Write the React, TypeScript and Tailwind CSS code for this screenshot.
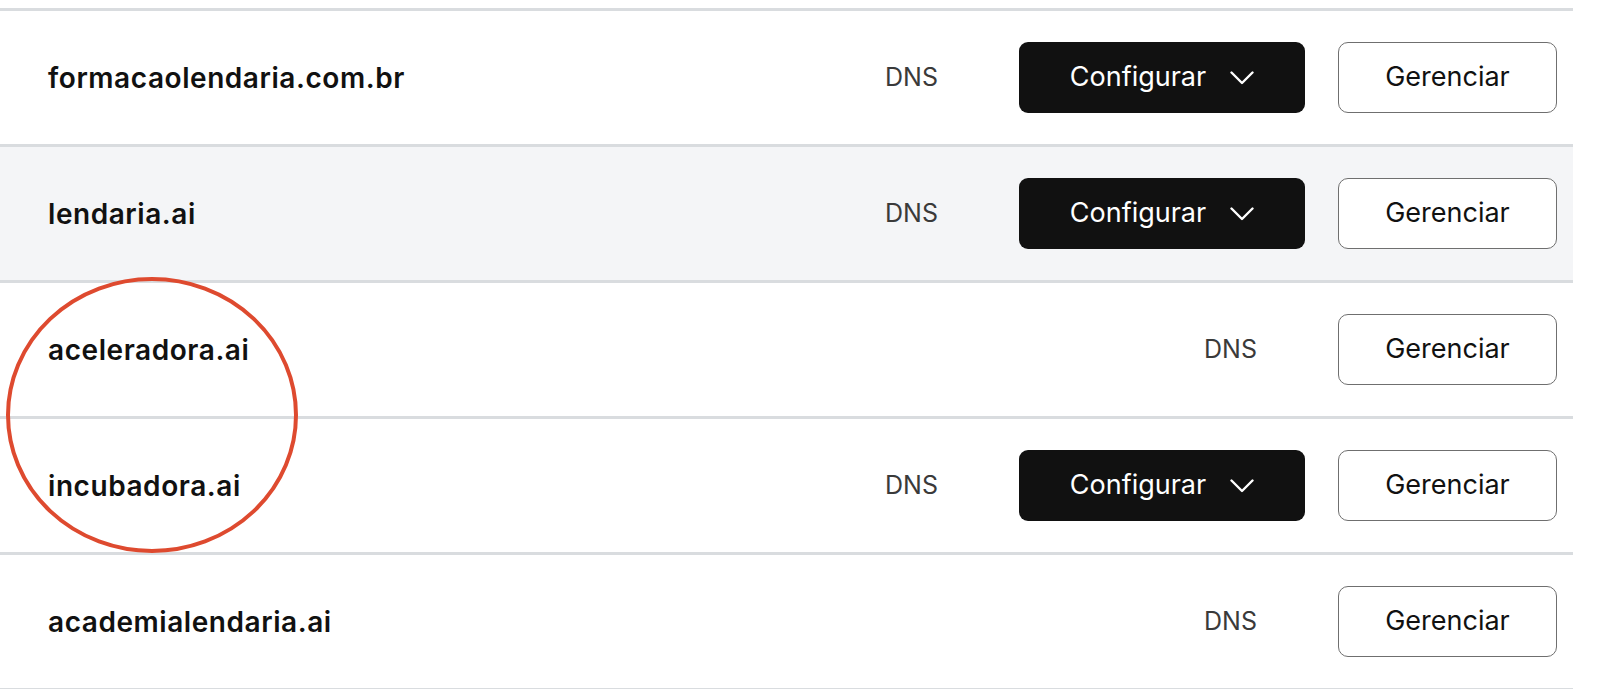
interface Domain {
  name: string;
  configurable: boolean;
  highlighted?: boolean;
}

const DOMAINS: Domain[] = [
  { name: 'formacaolendaria.com.br', configurable: true },
  { name: 'lendaria.ai', configurable: true, highlighted: true },
  { name: 'aceleradora.ai', configurable: false },
  { name: 'incubadora.ai', configurable: true },
  { name: 'academialendaria.ai', configurable: false },
];

function Chevron() {
  return (
    <svg width="24" height="14" viewBox="0 0 24 14" fill="none">
      <polyline points="1.5,1.5 12,12 22.5,1.5" stroke="currentColor" strokeWidth="2.4" strokeLinecap="round" strokeLinejoin="round" />
    </svg>
  );
}

function DomainRow({ domain }: { domain: Domain }) {
  return (
    <div
      className={`flex items-center h-[136px] border-t-[3px] border-[#d9dcdf] pl-12 pr-4 ${
        domain.highlighted ? 'bg-[#f4f5f7]' : 'bg-white'
      }`}
    >
      <span className="text-[28px] font-semibold text-[#111] tracking-[0.02em]">{domain.name}</span>
      <div className="ml-auto flex items-center">
        <span className="text-[25px] text-[#3a3a3a] mr-[81px]">DNS</span>
        {domain.configurable && (
          <button className="w-[286px] h-[71px] mr-[33px] rounded-[9px] bg-[#111] text-white text-[27px] flex items-center justify-center gap-[24px]">
            Configurar
            <Chevron />
          </button>
        )}
        <button className="w-[219px] h-[71px] rounded-[10px] border-[1.5px] border-[#6f6f6f] bg-white text-[#111] text-[27px]">
          Gerenciar
        </button>
      </div>
    </div>
  );
}

export default function App() {
  return (
    <div className="relative h-[689px] bg-white pt-2 overflow-hidden font-['Inter',sans-serif]">
      <div className="w-[1573px] border-b-[3px] border-[#d9dcdf]">
        {DOMAINS.map((d) => (
          <DomainRow key={d.name} domain={d} />
        ))}
      </div>
      <svg className="absolute left-0 top-[270px]" width="310" height="292" viewBox="0 0 310 292">
        <ellipse cx="152" cy="145" rx="144" ry="136" fill="none" stroke="#de4a2f" strokeWidth="4" />
      </svg>
    </div>
  );
}
